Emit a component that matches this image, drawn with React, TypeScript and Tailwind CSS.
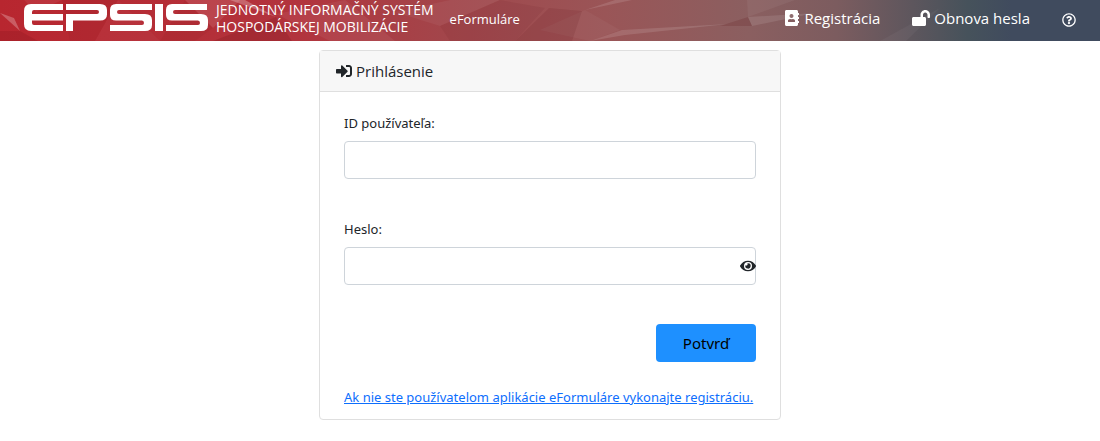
import React from 'react';
import { FaAddressBook, FaEye, FaLockOpen, FaRegQuestionCircle, FaSignInAlt } from 'react-icons/fa';

const Logo: React.FC = () => (
  <svg viewBox="0 0 184 27" className="h-[27px] w-[184px] shrink-0" fill="#fff" role="img" aria-label="EPSIS">
    <path d="M7 0H39V6H10Q8 6 8 8V10H39V16.5H8V19Q8 21 10 21H39V27H7Q0 27 0 20V7Q0 0 7 0Z" />
    <path d="M42 0H76Q83 0 83 6V10.5Q83 16.5 76 16.5H49V27H42V10H73Q75 10 75 8Q75 6 73 6H42Z" />
    <path d="M92 0H128V6H95Q93 6 93 8Q93 10 95 10H121Q128 10 128 16V21Q128 27 121 27H86V21H118Q120 21 120 19Q120 16.5 118 16.5H92Q86 16.5 86 11V6Q86 0 92 0Z" />
    <path d="M131 0H139V27H131Z" />
    <path d="M148 0H183V6H151Q149 6 149 8Q149 10 151 10H177Q184 10 184 16V21Q184 27 177 27H142V21H174Q176 21 176 19Q176 16.5 174 16.5H148Q142 16.5 142 11V6Q142 0 148 0Z" />
  </svg>
);

// Low-poly texture behind the navbar
const HeaderBackground: React.FC = () => (
  <svg
    viewBox="0 0 1100 41"
    preserveAspectRatio="none"
    className="absolute inset-0 -z-10 h-full w-full"
    aria-hidden="true"
  >
    <defs>
      <linearGradient id="nav" x1="0" x2="1" y1="0" y2="0">
        <stop offset="0" stopColor="#b8262f" />
        <stop offset="0.27" stopColor="#b2343d" />
        <stop offset="0.41" stopColor="#a2464b" />
        <stop offset="0.55" stopColor="#9a5557" />
        <stop offset="0.68" stopColor="#8b5f60" />
        <stop offset="0.76" stopColor="#7c5c5f" />
        <stop offset="0.83" stopColor="#5d565d" />
        <stop offset="0.88" stopColor="#46525b" />
        <stop offset="0.92" stopColor="#404b5e" />
        <stop offset="1" stopColor="#404b5e" />
      </linearGradient>
    </defs>
    <rect width="1100" height="41" fill="url(#nav)" />
    <g fill="#fff">
      <path d="M0 13L14 18L20 31Z" opacity="0.25" />
      <path d="M24 0L62 0L36 12Z" opacity="0.06" />
      <path d="M118 0L160 41H95Z" opacity="0.03" />
      <path d="M185 0H240L213 28Z" opacity="0.1" />
      <path d="M230 0H245L276 17Z" opacity="0.25" />
      <path d="M276 14L345 0L395 41H330Z" opacity="0.06" />
      <path d="M395 12L450 0H500L440 26Z" opacity="0.05" />
      <path d="M540 30L585 10L620 30L590 41Z" opacity="0.04" />
      <path d="M585 10L615 0H632Z" opacity="0.12" />
      <path d="M590 41L622 30L728 24L625 35Z" opacity="0.12" />
      <path d="M747 0H795L748 17Z" opacity="0.05" />
      <path d="M748 17L815 13L752 26Z" opacity="0.1" />
      <path d="M880 41L940 8L906 41Z" opacity="0.04" />
    </g>
    <g fill="#500008">
      <path d="M0 31L20 31L38 41H0Z" opacity="0.12" />
      <path d="M62 0L118 0L95 41L70 41Z" opacity="0.06" />
      <path d="M160 41L185 0L213 28L195 41Z" opacity="0.06" />
      <path d="M276 17L213 41H292Z" opacity="0.14" />
      <path d="M440 26L500 0L545 8L515 41H450Z" opacity="0.07" />
      <path d="M515 41L549 8L582 11L572 41Z" opacity="0.1" />
      <path d="M720 26L748 17L752 26Z" opacity="0.15" />
    </g>
  </svg>
);

const App: React.FC = () => {
  return (
    <div className="min-h-screen bg-white pb-5 font-['Open_Sans','Noto_Sans',sans-serif] text-[#212529]">
      <header className="relative isolate flex h-[41px] items-center px-6 text-white">
        <HeaderBackground />
        <a href="#" className="flex shrink-0 items-center gap-2 pb-[6px]">
          <Logo />
          <span className="text-[14px] leading-[17px] whitespace-nowrap">
            JEDNOTNÝ INFORMAČNÝ SYSTÉM
            <br />
            HOSPODÁRSKEJ MOBILIZÁCIE
          </span>
        </a>
        <a href="#" className="ml-4 pb-[2px] text-[13px]">eFormuláre</a>

        <nav className="ml-auto flex items-center gap-8 pb-[6px] text-[15px] leading-6 whitespace-nowrap">
          <a href="#" className="flex items-center gap-1">
            <FaAddressBook className="size-4" />
            Registrácia
          </a>
          <a href="#" className="flex items-center gap-1">
            <FaLockOpen className="h-4 w-[18px]" />
            Obnova hesla
          </a>
          <a href="#" aria-label="Pomoc" className="mt-1">
            <FaRegQuestionCircle className="size-[14px]" />
          </a>
        </nav>
      </header>

      <main className="px-4 pt-[9px]">
        <section className="mx-auto max-w-[462px] rounded border border-[#dfdfdf]">
          <h1 className="flex items-center gap-1 border-b border-[#dfdfdf] bg-[#f7f7f7] px-4 py-2 text-[15px] leading-6">
            <FaSignInAlt className="size-4" />
            Prihlásenie
          </h1>

          <form className="flex flex-col px-6 pt-5 pb-[11px] font-['Noto_Sans',sans-serif] text-[13px] leading-[22px]">
            <label htmlFor="login">ID používateľa:</label>
            <input id="login" type="text" className="mt-[7px] h-[38px] rounded border border-[#ced4da] px-3" />

            <label htmlFor="password" className="mt-[39px]">Heslo:</label>
            <div className="relative mt-[7px]">
              <input
                id="password"
                type="password"
                className="h-[38px] w-full rounded border border-[#ced4da] pr-6 pl-3"
              />
              <button type="button" aria-label="Zobraziť heslo" className="absolute inset-y-0 right-0">
                <FaEye className="size-4" />
              </button>
            </div>

            <button
              type="submit"
              className="mt-[39px] h-[38px] w-[100px] self-end rounded bg-[#1e90ff] text-[15px] text-black"
            >
              Potvrď
            </button>

            <a href="#" className="mt-6 text-[#0d6efd] underline">
              Ak nie ste používatelom aplikácie eFormuláre vykonajte registráciu.
            </a>
          </form>
        </section>
      </main>
    </div>
  );
};

export default App;
